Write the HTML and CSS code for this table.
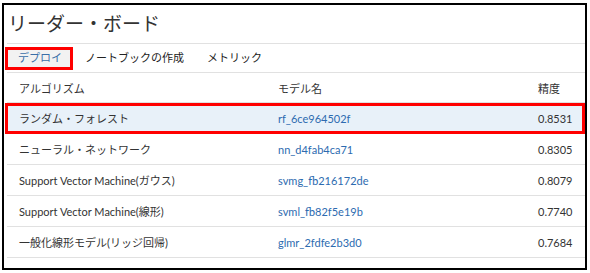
FILE: index.html
```html
<!DOCTYPE html>
<html lang="ja">
<head>
<meta charset="utf-8">
<link rel="stylesheet" href="styles.css">
</head>
<body>
<div class="panel">
  <h1 class="title">リーダー・ボード</h1>
  <div class="tabs">
    <div class="tab active">デプロイ</div>
    <div class="tab">ノートブックの作成</div>
    <div class="tab">メトリック</div>
  </div>
  <div class="table">
    <div class="row head">
      <div>アルゴリズム</div><div>モデル名</div><div>精度</div>
    </div>
    <div class="row selected">
      <div>ランダム・フォレスト</div><div class="link">rf_6ce964502f</div><div>0.8531</div>
    </div>
    <div class="row">
      <div>ニューラル・ネットワーク</div><div class="link">nn_d4fab4ca71</div><div>0.8305</div>
    </div>
    <div class="row">
      <div>Support Vector Machine(ガウス)</div><div class="link">svmg_fb216172de</div><div>0.8079</div>
    </div>
    <div class="row">
      <div>Support Vector Machine(線形)</div><div class="link">svml_fb82f5e19b</div><div>0.7740</div>
    </div>
    <div class="row">
      <div>一般化線形モデル(リッジ回帰)</div><div class="link">glmr_2fdfe2b3d0</div><div>0.7684</div>
    </div>
  </div>
</div>
</body>
</html>
```
FILE: styles.css
```css
* { box-sizing: border-box; }
body {
  margin: 0;
  background: #fff;
  font-family: "Lato", "Noto Sans CJK JP", sans-serif;
  color: #333;
}
.panel {
  margin: 3px 3px 0 2px;
  height: 267px;
  border: 2px solid #000;
  display: flex;
  flex-direction: column;
}
.title {
  margin: 0;
  height: 38px;
  padding-left: 4px;
  font-family: "Noto Sans CJK JP", sans-serif;
  font-weight: normal;
  font-size: 19px;
  line-height: 36px;
  color: #333;
}
.tabs {
  margin-left: 3px;
  height: 30px;
  border-top: 1px solid #e1e1e1;
  border-bottom: 1px solid #e1e1e1;
  display: flex;
  align-items: center;
}
.tab {
  font-size: 11px;
  line-height: 16px;
  color: #222;
}
.tab.active {
  margin-left: -2px;
  margin-right: 12px;
  height: 23px;
  width: 68px;
  display: flex;
  align-items: center;
  padding: 0 0 1px 10px;
  background: #f2f2f2;
  color: #3a6fa8;
  border: 3px solid #f00;
}
.tab + .tab:not(.active) ~ .tab { margin-left: 23px; }
.table {
  margin-left: 3px;
}
.row {
  display: grid;
  grid-template-columns: 259px 260px 1fr;
  padding-left: 12px;
  height: 31px;
  align-items: center;
  border-bottom: 1px solid #e1e1e1;
  font-size: 11px;
  color: #333;
}
.row.head { height: 30px; }
.row.selected {
  position: relative;
  background: #e8f1f9;
}
.row.selected::after {
  content: "";
  position: absolute;
  top: 0;
  bottom: -1px;
  left: -2px;
  right: 0;
  border: 3px solid #f00;
}
.link { color: #2d6bb0; }
```
